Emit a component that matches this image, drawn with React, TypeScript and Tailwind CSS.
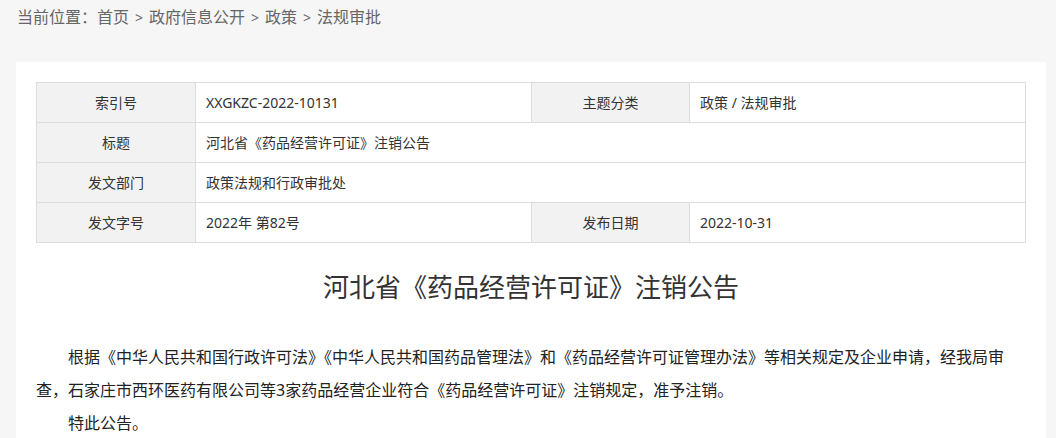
import React from "react";

const font = "font-['Noto_Sans','Noto_Sans_CJK_SC',sans-serif]";

const crumbs = ["首页", "政府信息公开", "政策", "法规审批"];

const InfoTable = () => {
  const label = "flex h-10 items-center justify-center bg-[#f2f2f2] border-r border-b border-[#dcdcdc]";
  const value = "flex h-10 items-center pl-[10px] border-r border-b border-[#dcdcdc]";
  return (
    <div className="grid grid-cols-[159px_336px_158px_1fr] border-t border-l border-[#dcdcdc] text-[14px] text-[#333] leading-5">
      <div className={label}>索引号</div>
      <div className={value}>XXGKZC-2022-10131</div>
      <div className={label}>主题分类</div>
      <div className={value}>政策 / 法规审批</div>

      <div className={label}>标题</div>
      <div className={`${value} col-span-3`}>河北省《药品经营许可证》注销公告</div>

      <div className={label}>发文部门</div>
      <div className={`${value} col-span-3`}>政策法规和行政审批处</div>

      <div className={label}>发文字号</div>
      <div className={value}>2022年 第82号</div>
      <div className={label}>发布日期</div>
      <div className={value}>2022-10-31</div>
    </div>
  );
};

export default function App() {
  return (
    <div className={`min-h-screen bg-[#f6f6f6] ${font}`}>
      {/* breadcrumb */}
      <div className="h-[62px] pl-[17px] pt-[5px] text-[16px] leading-6 text-[#666]">
        当前位置：
        {crumbs.map((c, i) => (
          <span key={c}>
            {i > 0 && <span className="mx-[6px] text-[14px]">&gt;</span>}
            {c}
          </span>
        ))}
      </div>

      <div className="ml-4 w-[1030px] bg-white px-5 pt-5 pb-10">
        <InfoTable />

        <h1 className="mt-[26px] text-center text-[26px] leading-9 text-[#333]">
          河北省《药品经营许可证》注销公告
        </h1>

        <div className="mt-[36px] pr-[14px] text-[16px] leading-[33px] text-[#222]">
          <p className="indent-8">
            根据《中华人民共和国行政许可法》《中华人民共和国药品管理法》和《药品经营许可证管理办法》等相关规定及企业申请，经我局审查，石家庄市西环医药有限公司等3家药品经营企业符合《药品经营许可证》注销规定，准予注销。
          </p>
          <p className="indent-8">特此公告。</p>
        </div>
      </div>
    </div>
  );
}
